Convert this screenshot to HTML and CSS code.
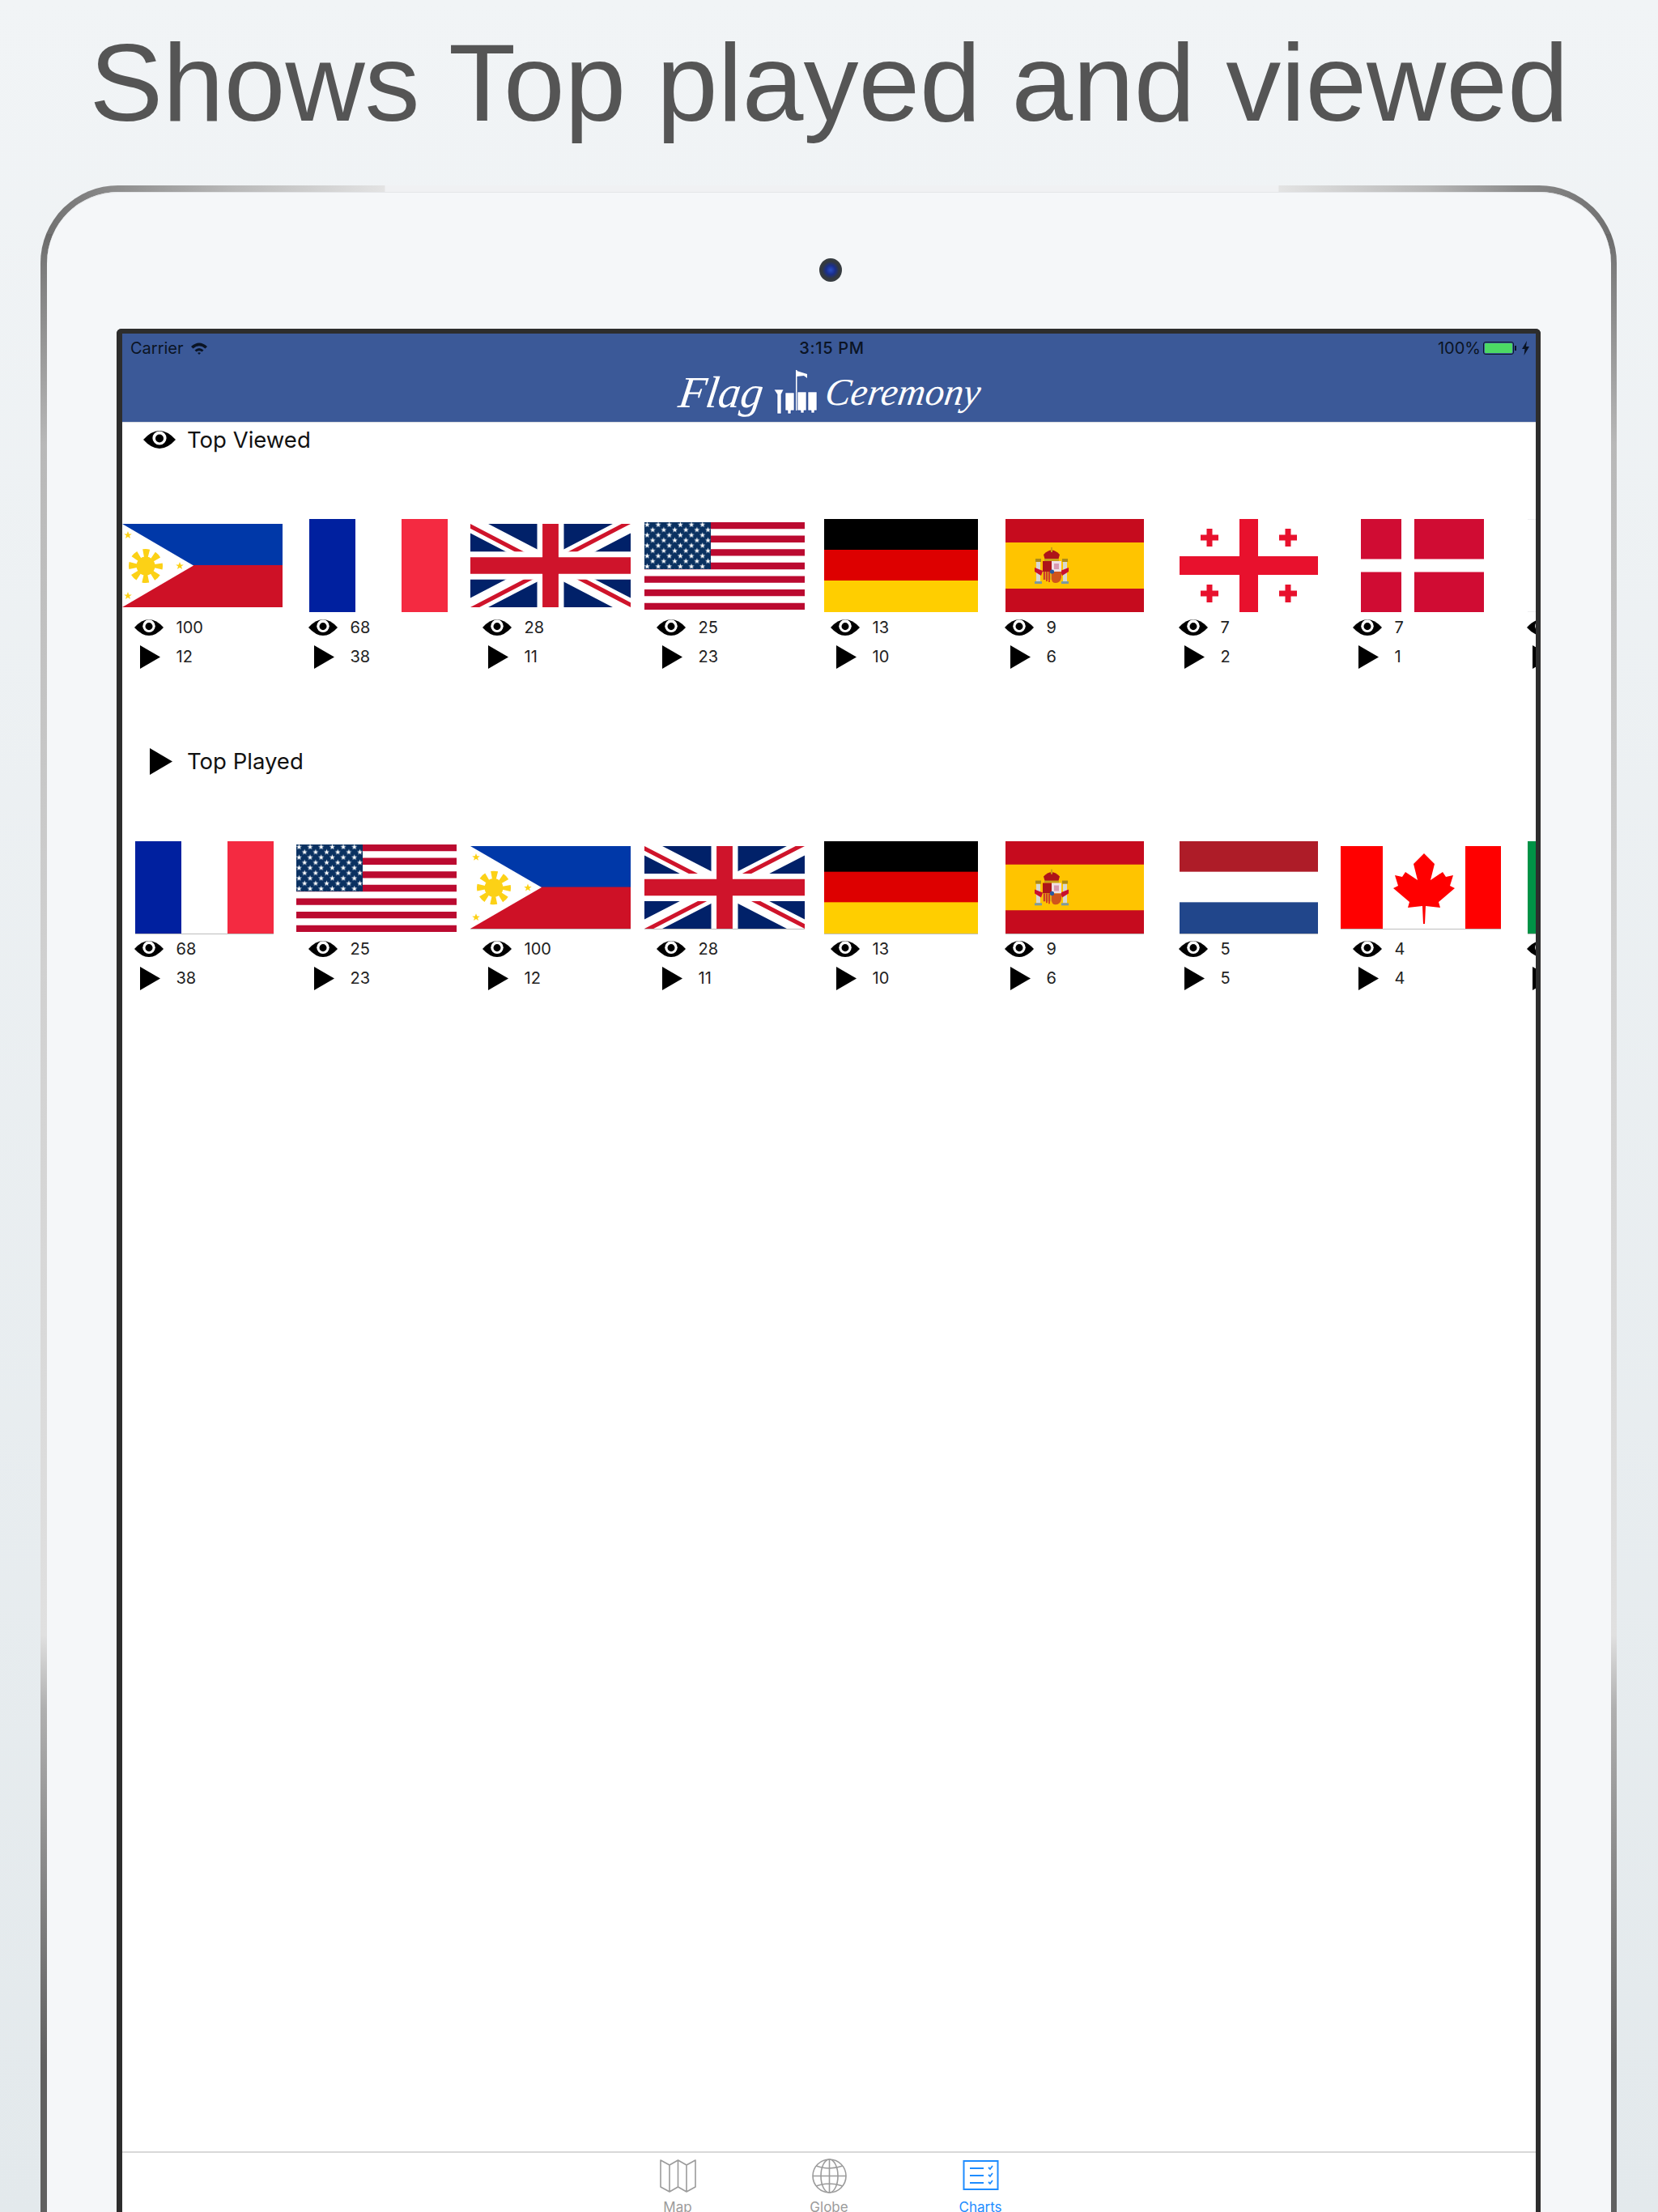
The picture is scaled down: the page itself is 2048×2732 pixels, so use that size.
FILE: index.html
```html
<!DOCTYPE html>
<html>
  <head>
    <meta charset="utf-8">
    <title>Flag Ceremony</title>
    <link rel="stylesheet" href="styles.css">
  </head>
  <body>
    <svg class="defs" width="0" height="0">
      <defs>
        <polygon id="star" points="0,-5 1.3,-1.6 4.8,-1.5 2,.6 3,4 0,2 -3,4 -2,.6 -4.8,-1.5 -1.3,-1.6"/>
        <pattern id="us-stars" width="13.67" height="12.9" patternUnits="userSpaceOnUse" x="0" y="-.3">
          <use href="#star" transform="translate(3.4 3.4) scale(.72)" fill="#fff"/>
          <use href="#star" transform="translate(10.2 9.8) scale(.72)" fill="#fff"/>
        </pattern>

        <symbol id="icon-eye" viewBox="0 0 40 22" preserveAspectRatio="none">
          <path d="M0 11Q10 0 20 0Q30 0 40 11Q30 22 20 22Q10 22 0 11Z" fill="#000"/>
          <circle cx="20" cy="9" r="8.6" fill="#fff"/>
          <circle cx="20" cy="9.5" r="5" fill="#000"/>
        </symbol>
        <symbol id="icon-play" viewBox="0 0 25 29" preserveAspectRatio="none">
          <polygon points="0,0 25,14.5 0,29" fill="#000"/>
        </symbol>

        <symbol id="flag-ph" viewBox="0 0 198 103" preserveAspectRatio="none">
          <rect width="198" height="52" fill="#0038a8"/>
          <rect y="51" width="198" height="52" fill="#ce1126"/>
          <polygon points="0,0 88,51.5 0,103" fill="#fff"/>
          <circle cx="29" cy="52" r="11.500" fill="#fcd116"/>
          <circle cx="29" cy="52" r="16" fill="none" stroke="#fcd116" stroke-width="10" stroke-dasharray="7 5.570" stroke-dashoffset="3.500"/>
          <use href="#star" transform="translate(7 14)" fill="#fcd116"/>
          <use href="#star" transform="translate(7 89)" fill="#fcd116"/>
          <use href="#star" transform="translate(71 52)" fill="#fcd116"/>
        </symbol>
        <symbol id="flag-fr" viewBox="0 0 171 115" preserveAspectRatio="none">
          <rect width="57" height="115" fill="#00209f"/>
          <rect x="57" width="57" height="115" fill="#fff"/>
          <rect x="114" width="57" height="115" fill="#f42a41"/>
        </symbol>
        <symbol id="flag-uk" viewBox="0 0 60 30" preserveAspectRatio="none">
          <rect width="60" height="30" fill="#012169"/>
          <path d="M0 0L60 30M60 0L0 30" stroke="#fff" stroke-width="6"/>
          <path d="M0 0L30 15H26.6L0 1.7ZM60 0L33.4 13.3H30L56.6 0ZM60 30L30 15H33.4L60 28.3ZM0 30L26.6 16.7H30L3.4 30Z" fill="#cf142b"/>
          <path d="M30 0V30M0 15H60" stroke="#fff" stroke-width="10"/>
          <path d="M30 0V30M0 15H60" stroke="#cf142b" stroke-width="6"/>
        </symbol>
        <symbol id="flag-us" viewBox="0 0 198 108" preserveAspectRatio="none">
          <rect width="198" height="108" fill="#fff"/>
          <path d="M0 4.15H198M0 20.77H198M0 37.38H198M0 54H198M0 70.6H198M0 87.2H198M0 103.85H198" stroke="#bb0a30" stroke-width="8.3"/>
          <rect width="82" height="58" fill="#0a3161"/>
          <rect width="82" height="58" fill="url(#us-stars)"/>
        </symbol>
        <symbol id="flag-de" viewBox="0 0 190 115" preserveAspectRatio="none">
          <rect width="190" height="39" fill="#000"/>
          <rect y="38" width="190" height="39" fill="#dd0000"/>
          <rect y="76" width="190" height="39" fill="#ffce00"/>
        </symbol>
        <symbol id="flag-es" viewBox="0 0 171 115" preserveAspectRatio="none">
          <rect width="171" height="115" fill="#c60b1e"/>
          <rect y="29" width="171" height="57" fill="#ffc400"/>
          <rect x="38" y="53" width="5" height="24" fill="#d8d8d0"/>
          <rect x="71" y="53" width="5" height="24" fill="#d8d8d0"/>
          <rect x="37" y="49" width="7" height="4" fill="#ad8a1a"/>
          <rect x="70" y="49" width="7" height="4" fill="#ad8a1a"/>
          <rect x="36" y="77" width="9" height="3" fill="#7c9aa0"/>
          <rect x="69" y="77" width="9" height="3" fill="#7c9aa0"/>
          <path d="M36 60L46 64L44 70L36 65ZM78 60L68 64L70 70L78 65Z" fill="#c8102e"/>
          <path d="M47 44Q57 33 67 44L65 51H49Z" fill="#ad1519"/>
          <rect x="48" y="49" width="18" height="3" fill="#c8a018"/>
          <rect x="56" y="35" width="2" height="6" fill="#c8a018"/>
          <rect x="46" y="52" width="11" height="13" fill="#ad1519"/>
          <rect x="57" y="52" width="12" height="13" fill="#f0e0e4"/>
          <rect x="60" y="55" width="6" height="7" fill="#d89ab0"/>
          <rect x="46" y="65" width="11" height="10" fill="#e0a818"/>
          <path d="M48 65V75M51 65V77M54 65V78" stroke="#c8102e" stroke-width="1.4"/>
          <path d="M57 65H69V72Q68 79 62 79Q57 79 57 74Z" fill="#d0541c"/>
          <circle cx="57.5" cy="65" r="2.6" fill="#2a5aa0"/>
        </symbol>
        <symbol id="flag-ge" viewBox="0 0 171 115" preserveAspectRatio="none">
          <rect width="171" height="115" fill="#fff"/>
          <path d="M85.5 0V115M0 57.5H171" stroke="#e8112d" stroke-width="23"/>
          <path d="M37 12V34M26 23H48M134 12V34M123 23H145M37 81V103M26 92H48M134 81V103M123 92H145" stroke="#e8112d" stroke-width="7"/>
        </symbol>
        <symbol id="flag-dk" viewBox="0 0 152 115" preserveAspectRatio="none">
          <rect width="152" height="115" fill="#d00c33"/>
          <path d="M58 0V115M0 57.5H152" stroke="#fff" stroke-width="16"/>
        </symbol>
        <symbol id="flag-nl" viewBox="0 0 171 115" preserveAspectRatio="none">
          <rect width="171" height="39" fill="#ae1c28"/>
          <rect y="38" width="171" height="39" fill="#fff"/>
          <rect y="76" width="171" height="39" fill="#21468b"/>
        </symbol>
        <symbol id="flag-ca" viewBox="0 0 198 102" preserveAspectRatio="none">
          <rect width="198" height="102" fill="#fff"/>
          <rect width="52" height="102" fill="#f00"/>
          <rect x="154" width="44" height="102" fill="#f00"/>
          <polygon fill="#f00" points="103,9 116,22 111,42 126,32 130,38 139,36 135,49 141,52 121,69 123,76 105,74 104,96 102,96 101,74 83,76 85,69 65,52 71,49 67,36 76,38 80,32 95,42 90,22"/>
        </symbol>
        <symbol id="flag-it" viewBox="0 0 171 115" preserveAspectRatio="none">
          <rect width="57" height="115" fill="#009246"/>
          <rect x="57" width="57" height="115" fill="#fff"/>
          <rect x="114" width="57" height="115" fill="#ce2b37"/>
        </symbol>
        <symbol id="flag-blank" viewBox="0 0 171 115" preserveAspectRatio="none">
          <rect width="171" height="115" fill="#fff"/>
          <path d="M0 .5H171M0 114.5H171" stroke="#f0f0f2"/>
        </symbol>
      </defs>
    </svg>

    <h1 class="page-title">Shows Top played and viewed</h1>

    <div class="device">
      <div class="device-inner">
        <div class="camera-row"><span class="camera"></span></div>

        <div class="screen">
          <header class="app-head">
            <div class="status-bar">
              <div class="status-left">
                <span>Carrier</span>
                <svg class="wifi" viewBox="0 0 22 16">
                  <path d="M1 6Q11 -3 21 6L18.5 8.5Q11 2 3.500 8.500Z" fill="#0b1424"/>
                  <path d="M5.500 10.500Q11 5.500 16.500 10.500L14.500 12.500Q11 9.800 7.500 12.500Z" fill="#0b1424"/>
                  <path d="M9 14Q11 12.500 13 14L11 16Z" fill="#0b1424"/>
                </svg>
              </div>
              <div class="status-time">3:15 PM</div>
              <div class="status-right">
                <span>100%</span>
                <span class="battery"><span class="battery-fill"></span></span>
                <span class="battery-nub"></span>
                <svg class="bolt" viewBox="0 0 9 18"><polygon points="6,0 0,10 3.500,10 2.500,18 9,7 5,7" fill="#0b1424"/></svg>
              </div>
            </div>
            <div class="app-logo">
              <span class="logo-flag">Flag</span>
              <svg class="logo-mark" viewBox="0 0 55 55">
                <rect x="28" y="0" width="1.500" height="50" fill="#fff"/>
                <polygon points="29,1 42,5 42,10 38,7 29,8" fill="#fff"/>
                <g fill="#fff" stroke="#1f3f91" stroke-width=".6">
                  <path d="M1 24H13L10 30V54H5V30Z"/>
                  <path d="M15 28H26V50H22V54H18V50H15Z"/>
                  <path d="M30 27H41V50H38V53H34V50H30Z"/>
                  <path d="M43 27H54V50H51V53H47V50H43Z"/>
                </g>
              </svg>
              <span class="logo-word">Ceremony</span>
            </div>
          </header>

          <main class="charts">
            <section class="chart-section">
              <h2 class="chart-title">
                <span class="title-icon eye-title"><svg><use href="#icon-eye"/></svg></span>
                Top Viewed
              </h2>
              <div class="flag-strip">
                <div class="flag-cell">
                  <div class="flag-box"><svg class="flag flag-wide flag-h103"><use href="#flag-ph"/></svg></div>
                  <div class="stat"><svg class="stat-eye"><use href="#icon-eye"/></svg><span>100</span></div>
                  <div class="stat"><svg class="stat-play"><use href="#icon-play"/></svg><span>12</span></div>
                </div>
                <div class="flag-cell">
                  <div class="flag-box"><svg class="flag flag-std"><use href="#flag-fr"/></svg></div>
                  <div class="stat"><svg class="stat-eye"><use href="#icon-eye"/></svg><span>68</span></div>
                  <div class="stat"><svg class="stat-play"><use href="#icon-play"/></svg><span>38</span></div>
                </div>
                <div class="flag-cell">
                  <div class="flag-box"><svg class="flag flag-wide flag-h103"><use href="#flag-uk"/></svg></div>
                  <div class="stat"><svg class="stat-eye"><use href="#icon-eye"/></svg><span>28</span></div>
                  <div class="stat"><svg class="stat-play"><use href="#icon-play"/></svg><span>11</span></div>
                </div>
                <div class="flag-cell">
                  <div class="flag-box"><svg class="flag flag-wide flag-h108"><use href="#flag-us"/></svg></div>
                  <div class="stat"><svg class="stat-eye"><use href="#icon-eye"/></svg><span>25</span></div>
                  <div class="stat"><svg class="stat-play"><use href="#icon-play"/></svg><span>23</span></div>
                </div>
                <div class="flag-cell">
                  <div class="flag-box"><svg class="flag flag-de"><use href="#flag-de"/></svg></div>
                  <div class="stat"><svg class="stat-eye"><use href="#icon-eye"/></svg><span>13</span></div>
                  <div class="stat"><svg class="stat-play"><use href="#icon-play"/></svg><span>10</span></div>
                </div>
                <div class="flag-cell">
                  <div class="flag-box"><svg class="flag flag-std"><use href="#flag-es"/></svg></div>
                  <div class="stat"><svg class="stat-eye"><use href="#icon-eye"/></svg><span>9</span></div>
                  <div class="stat"><svg class="stat-play"><use href="#icon-play"/></svg><span>6</span></div>
                </div>
                <div class="flag-cell">
                  <div class="flag-box"><svg class="flag flag-std"><use href="#flag-ge"/></svg></div>
                  <div class="stat"><svg class="stat-eye"><use href="#icon-eye"/></svg><span>7</span></div>
                  <div class="stat"><svg class="stat-play"><use href="#icon-play"/></svg><span>2</span></div>
                </div>
                <div class="flag-cell">
                  <div class="flag-box"><svg class="flag flag-dk"><use href="#flag-dk"/></svg></div>
                  <div class="stat"><svg class="stat-eye"><use href="#icon-eye"/></svg><span>7</span></div>
                  <div class="stat"><svg class="stat-play"><use href="#icon-play"/></svg><span>1</span></div>
                </div>
                <div class="flag-cell">
                  <div class="flag-box"><svg class="flag flag-std"><use href="#flag-blank"/></svg></div>
                  <div class="stat"><svg class="stat-eye"><use href="#icon-eye"/></svg></div>
                  <div class="stat"><svg class="stat-play"><use href="#icon-play"/></svg></div>
                </div>
              </div>
            </section>

            <section class="chart-section">
              <h2 class="chart-title">
                <span class="title-icon play-title"><svg><use href="#icon-play"/></svg></span>
                Top Played
              </h2>
              <div class="flag-strip played">
                <div class="flag-cell">
                  <div class="flag-box"><svg class="flag flag-std"><use href="#flag-fr"/></svg></div>
                  <div class="stat"><svg class="stat-eye"><use href="#icon-eye"/></svg><span>68</span></div>
                  <div class="stat"><svg class="stat-play"><use href="#icon-play"/></svg><span>38</span></div>
                </div>
                <div class="flag-cell">
                  <div class="flag-box"><svg class="flag flag-wide flag-h108 no-line"><use href="#flag-us"/></svg></div>
                  <div class="stat"><svg class="stat-eye"><use href="#icon-eye"/></svg><span>25</span></div>
                  <div class="stat"><svg class="stat-play"><use href="#icon-play"/></svg><span>23</span></div>
                </div>
                <div class="flag-cell">
                  <div class="flag-box"><svg class="flag flag-wide flag-h103"><use href="#flag-ph"/></svg></div>
                  <div class="stat"><svg class="stat-eye"><use href="#icon-eye"/></svg><span>100</span></div>
                  <div class="stat"><svg class="stat-play"><use href="#icon-play"/></svg><span>12</span></div>
                </div>
                <div class="flag-cell">
                  <div class="flag-box"><svg class="flag flag-wide flag-h103"><use href="#flag-uk"/></svg></div>
                  <div class="stat"><svg class="stat-eye"><use href="#icon-eye"/></svg><span>28</span></div>
                  <div class="stat"><svg class="stat-play"><use href="#icon-play"/></svg><span>11</span></div>
                </div>
                <div class="flag-cell">
                  <div class="flag-box"><svg class="flag flag-de"><use href="#flag-de"/></svg></div>
                  <div class="stat"><svg class="stat-eye"><use href="#icon-eye"/></svg><span>13</span></div>
                  <div class="stat"><svg class="stat-play"><use href="#icon-play"/></svg><span>10</span></div>
                </div>
                <div class="flag-cell">
                  <div class="flag-box"><svg class="flag flag-std"><use href="#flag-es"/></svg></div>
                  <div class="stat"><svg class="stat-eye"><use href="#icon-eye"/></svg><span>9</span></div>
                  <div class="stat"><svg class="stat-play"><use href="#icon-play"/></svg><span>6</span></div>
                </div>
                <div class="flag-cell">
                  <div class="flag-box"><svg class="flag flag-std"><use href="#flag-nl"/></svg></div>
                  <div class="stat"><svg class="stat-eye"><use href="#icon-eye"/></svg><span>5</span></div>
                  <div class="stat"><svg class="stat-play"><use href="#icon-play"/></svg><span>5</span></div>
                </div>
                <div class="flag-cell">
                  <div class="flag-box"><svg class="flag flag-wide flag-h103"><use href="#flag-ca"/></svg></div>
                  <div class="stat"><svg class="stat-eye"><use href="#icon-eye"/></svg><span>4</span></div>
                  <div class="stat"><svg class="stat-play"><use href="#icon-play"/></svg><span>4</span></div>
                </div>
                <div class="flag-cell">
                  <div class="flag-box"><svg class="flag flag-std"><use href="#flag-it"/></svg></div>
                  <div class="stat"><svg class="stat-eye"><use href="#icon-eye"/></svg></div>
                  <div class="stat"><svg class="stat-play"><use href="#icon-play"/></svg></div>
                </div>
              </div>
            </section>
          </main>

          <nav class="tab-bar">
            <div class="tab">
              <svg class="tab-icon" viewBox="0 0 45 43">
                <path d="M1 2L12 8L22.500 2L33 8L44 2V35L33 41L22.500 35L12 41L1 35ZM12 8V41M22.500 2V35M33 8V41" fill="none" stroke="#9b9b9b" stroke-width="1.600" stroke-linejoin="round"/>
              </svg>
              <span>Map</span>
            </div>
            <div class="tab">
              <svg class="tab-icon" viewBox="0 0 45 43">
                <g fill="none" stroke="#9b9b9b" stroke-width="1.600">
                  <circle cx="22.500" cy="21.500" r="20.500"/>
                  <ellipse cx="22.500" cy="21.500" rx="10.500" ry="20.500"/>
                  <path d="M22.500 1V42M2 21.500H43M6 9Q22.500 15 39 9M6 34Q22.500 28 39 34"/>
                </g>
              </svg>
              <span>Globe</span>
            </div>
            <div class="tab tab-active">
              <svg class="tab-icon" viewBox="0 0 45 43">
                <g fill="none" stroke="#1e8cff">
                  <rect x="1.500" y="3" width="42" height="35" stroke-width="2"/>
                  <path d="M9 12H26M9 21H26M9 30H26" stroke-width="2.200"/>
                  <path d="M32 11L34 13L37 9M32 20L34 22L37 18M32 29L34 31L37 27" stroke-width="1.800"/>
                </g>
              </svg>
              <span>Charts</span>
            </div>
          </nav>
        </div>
      </div>
    </div>
  </body>
</html>
```

FILE: styles.css
```css
html,
body {
  margin: 0;
  height: 2732px;
  overflow: hidden;
}

body {
  background: linear-gradient(180deg, #f1f4f6 0%, #e3e9ec 100%);
  font-family: Inter, "Liberation Sans", sans-serif;
  color: #111;
}

.defs {
  display: block;
  height: 0;
}

.page-title {
  margin: 0;
  height: 229px;
  box-sizing: border-box;
  padding-top: 24px;
  text-align: center;
  font-family: "Liberation Sans", Arial, sans-serif;
  font-size: 136px;
  line-height: 156px;
  font-weight: 400;
  color: #555;
  white-space: nowrap;
}

/* tablet shell */
.device {
  box-sizing: border-box;
  height: 2503px;
  margin: 0 51px 0 50px;
  padding: 8px 7px 0 8px;
  border-radius: 96px 96px 0 0;
  background:
    linear-gradient(90deg, #6f6f6f 0, #8e8e8e 5%, #b8b8b8 12%, #e3e3e3 21.800%, #f0f1f3 21.900%, #f0f1f3 78.500%, #e3e3e3 78.600%, #b8b8b8 88%, #8a8a8a 94%, #6f6f6f 100%) top / 100% 60px no-repeat,
    linear-gradient(180deg, #6a6a6a 60px, #7c7c7c 100px, #b8b8b8 320px, #d0d0d0 960px, #e0e0e0 1790px, #b0b0b0 1880px, #8a8a8a 2070px, #606060 2320px);
}

.device-inner {
  box-sizing: border-box;
  height: 100%;
  padding: 0 87px 0 86px;
  border-radius: 88px 88px 0 0;
  background: #f5f7f9;
  box-shadow: inset 0 1px 0 #e4e6e9;
}

.camera-row {
  display: flex;
  justify-content: center;
  height: 169px;
  padding: 82px 0 0 4px;
  box-sizing: border-box;
}

.camera {
  width: 28px;
  height: 29px;
  border-radius: 50%;
  background: radial-gradient(circle, #2b4fc4 0, #1a2f8c 28%, #33393f 52%, #3f4347 100%);
}

.screen {
  box-sizing: border-box;
  display: flex;
  flex-direction: column;
  height: 2326px;
  background: #fff;
  border: solid #2d2d2d;
  border-width: 6px 6px 0 7px;
  border-radius: 6px 6px 0 0;
}

/* nav header */
.app-head {
  height: 109px;
  flex: none;
  background: #3b5998;
  border-bottom: 1px solid #d8dbe0;
}

.status-bar {
  display: grid;
  grid-template-columns: 1fr auto 1fr;
  align-items: center;
  height: 36px;
  padding: 0 8px 0 10px;
  font-size: 20px;
  color: #0b1424;
}

.status-left,
.status-right {
  display: flex;
  align-items: center;
}

.status-left {
  gap: 8px;
}

.status-right {
  justify-content: flex-end;
}

.status-time {
  padding-left: 5px;
  font-weight: 500;
  letter-spacing: .7px;
}

.wifi {
  width: 22px;
  height: 16px;
}

.battery {
  box-sizing: border-box;
  width: 38px;
  height: 16px;
  margin-left: 3px;
  padding: 1px;
  border: 1px solid #0b1424;
  border-radius: 3px;
}

.battery-fill {
  display: block;
  height: 100%;
  background: #4cd964;
  border-radius: 1px;
}

.battery-nub {
  width: 2px;
  height: 6px;
  margin-left: 1px;
  background: #0b1424;
}

.bolt {
  width: 9px;
  height: 18px;
  margin-left: 7px;
}

.app-logo {
  display: flex;
  align-items: center;
  justify-content: center;
  height: 72px;
  padding: 0 0 0 3px;
  font-family: "Liberation Serif", serif;
  font-style: italic;
  color: #fff;
}

.logo-flag {
  display: inline-block;
  margin-right: 12px;
  font-size: 55px;
  transform: skewX(-8deg);
}

.logo-word {
  display: inline-block;
  margin-left: 10px;
  font-size: 47px;
  transform: skewX(-8deg);
}

.logo-mark {
  width: 55px;
  height: 55px;
}

/* chart rows */
.charts {
  flex: 1;
  overflow: hidden;
}

.chart-section {
  height: 398px;
}

.chart-title {
  display: flex;
  align-items: center;
  height: 42px;
  margin: 0 0 77px;
  font-size: 27.500px;
  font-weight: 400;
  color: #111;
}

.chart-section + .chart-section .chart-title {
  height: 40px;
  margin-bottom: 79px;
}

.title-icon {
  display: flex;
  box-sizing: border-box;
  width: 80px;
}

.eye-title {
  padding-left: 26px;
}

.eye-title svg {
  width: 40px;
  height: 22px;
}

.play-title {
  padding-left: 34px;
}

.play-title svg {
  width: 28px;
  height: 33px;
}

.flag-strip {
  display: flex;
  overflow: hidden;
}

.flag-cell {
  flex: none;
  width: 215px;
}

.flag-box {
  display: flex;
  align-items: center;
  height: 115px;
  margin-bottom: 1px;
}

.played .flag-box {
  margin-bottom: 0;
}

.flag {
  display: block;
  flex: none;
}

.flag-wide {
  width: 198px;
}

.flag-h103 {
  height: 103px;
}

.flag-h108 {
  height: 108px;
}

.flag-std {
  width: 171px;
  height: 115px;
  margin-left: 16px;
}

.flag-de {
  width: 190px;
  height: 115px;
  margin-left: 7px;
}

.flag-dk {
  width: 152px;
  height: 115px;
  margin-left: 25px;
}

.played .flag {
  border-bottom: 1px solid #bdbdbd;
  box-sizing: border-box;
}

.played .flag.no-line {
  border-bottom: 0;
}

.stat {
  display: flex;
  align-items: center;
  height: 36px;
  font-size: 20px;
  color: #222;
}

.stat-eye {
  width: 36px;
  height: 20px;
  margin: 0 15.500px 0 15px;
}

.stat-play {
  width: 25px;
  height: 29px;
  margin: 0 20px 0 21.500px;
}

/* bottom tabs */
.tab-bar {
  display: flex;
  justify-content: center;
  flex: none;
  height: 75px;
  overflow: hidden;
  border-top: 2px solid #d8d8d8;
  box-sizing: border-box;
  background: #fff;
}

.tab {
  display: flex;
  flex-direction: column;
  align-items: center;
  width: 187px;
  padding-top: 7px;
  font-size: 17px;
  line-height: 20px;
  color: #9b9b9b;
}

.tab-active {
  color: #1e8cff;
}

.tab-icon {
  flex: none;
  width: 45px;
  height: 43px;
  margin-bottom: 7px;
}
```
